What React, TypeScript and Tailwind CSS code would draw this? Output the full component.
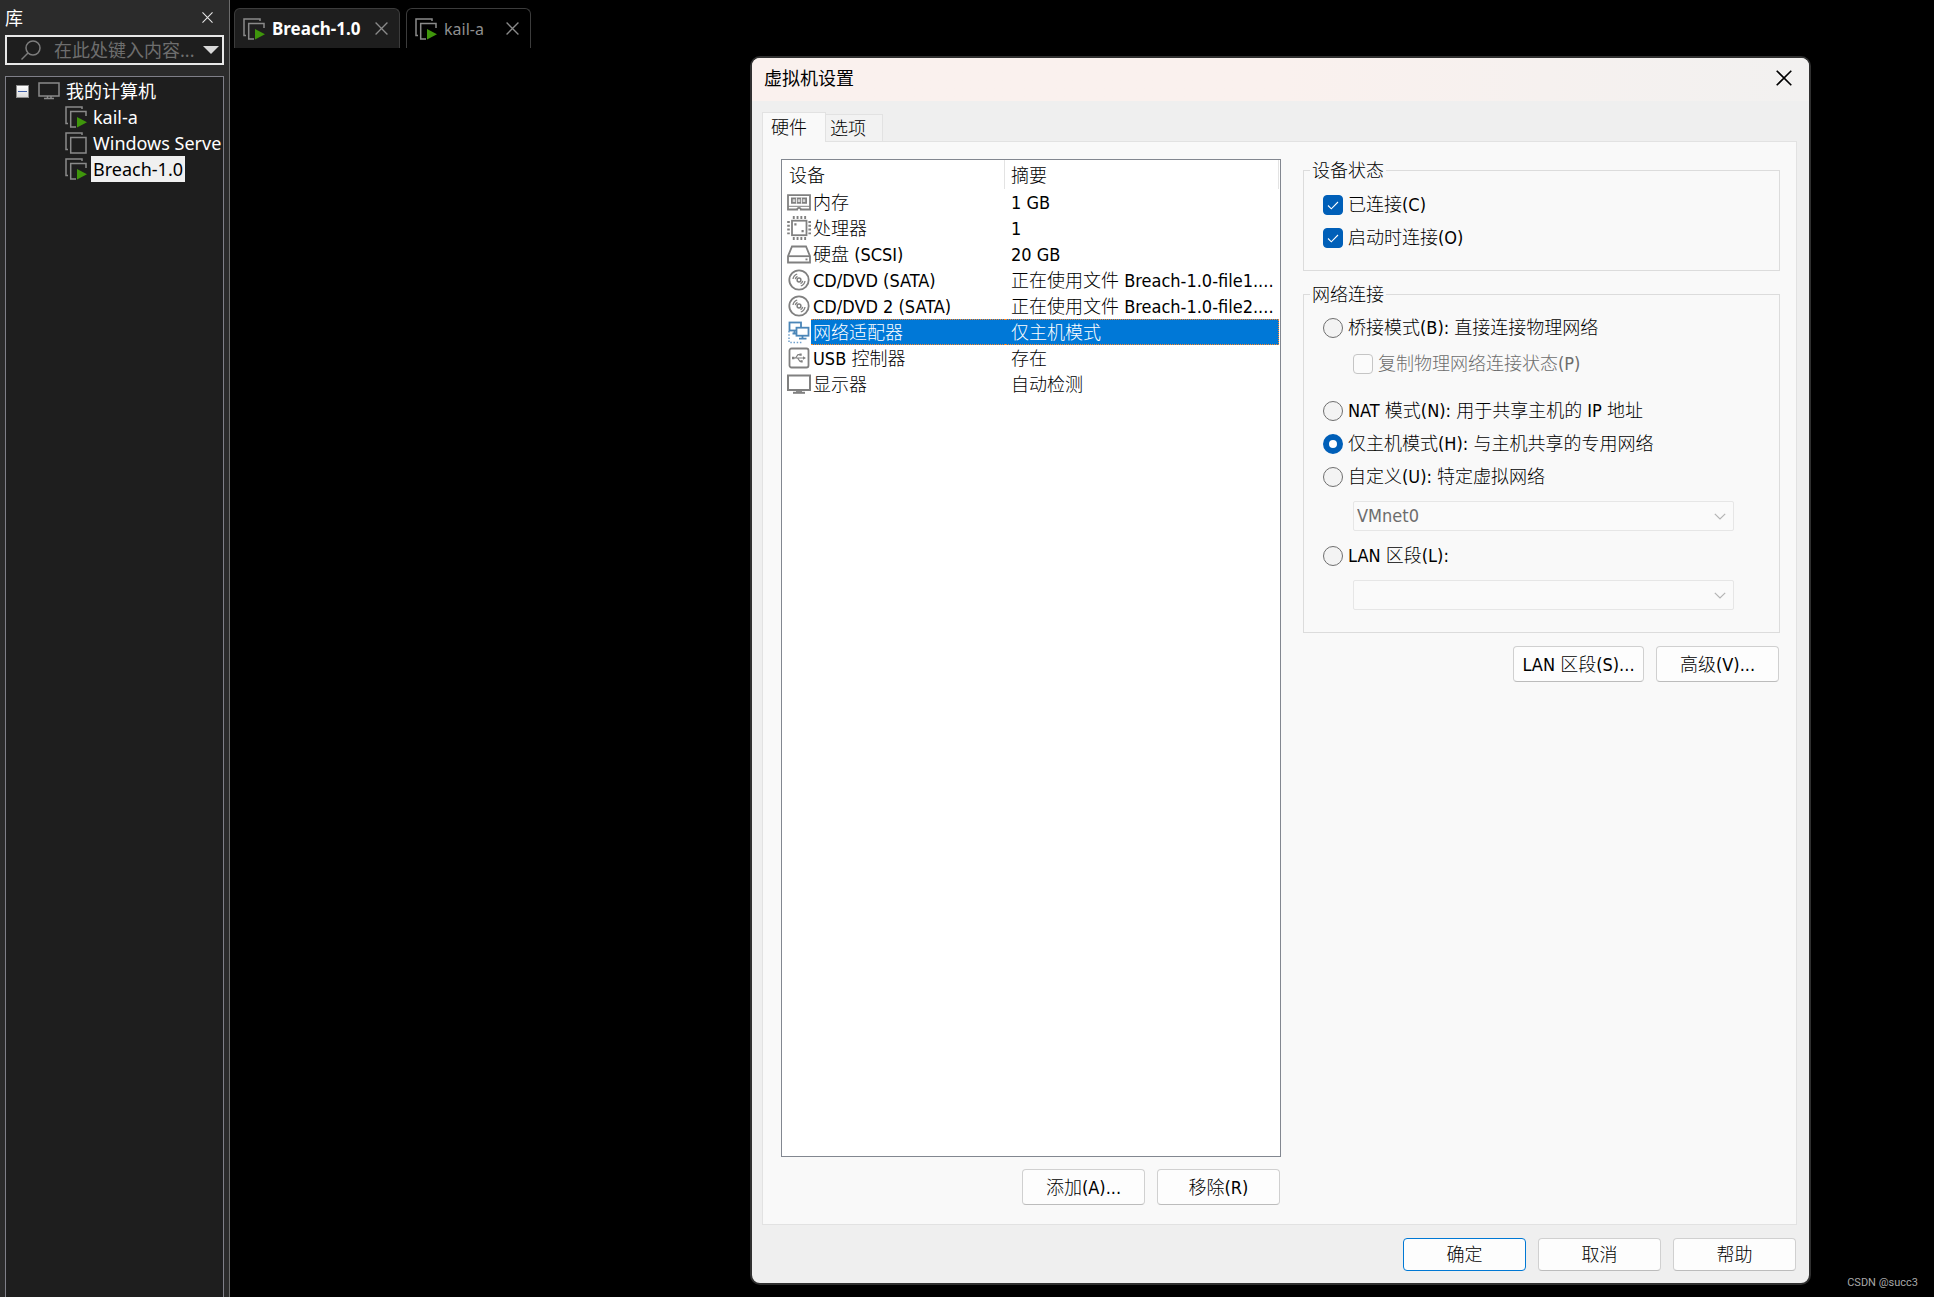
import { useState } from 'react'
import type { ReactNode } from 'react'
import clsx from 'clsx'

interface Device {
  name: string
  summary: string
  icon: ReactNode
}

const devices: Device[] = [
  { name: '内存', summary: '1 GB', icon: <MemoryIcon /> },
  { name: '处理器', summary: '1', icon: <CpuIcon /> },
  { name: '硬盘 (SCSI)', summary: '20 GB', icon: <DiskIcon /> },
  { name: 'CD/DVD (SATA)', summary: '正在使用文件 Breach-1.0-file1....', icon: <DiscIcon /> },
  { name: 'CD/DVD 2 (SATA)', summary: '正在使用文件 Breach-1.0-file2....', icon: <DiscIcon /> },
  { name: '网络适配器', summary: '仅主机模式', icon: <NetworkIcon /> },
  { name: 'USB 控制器', summary: '存在', icon: <UsbIcon /> },
  { name: '显示器', summary: '自动检测', icon: <DisplayIcon /> },
]

export default function App() {
  return (
    <div className="flex h-screen overflow-hidden bg-black font-['Noto_Sans','Noto_Sans_CJK_SC',sans-serif] text-lg leading-[26px]">
      <Library />
      <main className="flex min-w-0 flex-1 flex-col">
        <div className="flex gap-[6px] pt-2 pl-1">
          <VmTab name="Breach-1.0" active />
          <VmTab name="kail-a" />
        </div>
        <div className="mt-2 mr-[123px] mb-3 flex min-h-0 flex-1 justify-end">
          <SettingsDialog />
        </div>
      </main>
      <footer className="absolute right-4 bottom-[7px] font-[Roboto,sans-serif] text-[11px] leading-[14px] text-[#a8a8a8]">
        CSDN @succ3
      </footer>
    </div>
  )
}

/* ---------- 左侧库 ---------- */

function Library() {
  return (
    <aside className="flex w-[230px] shrink-0 flex-col border-r border-[#6b6b6b] bg-[#2b2b2b] pr-[5px] pl-[5px] text-white">
      <div className="flex h-[35px] items-center justify-between pr-[11px]">
        <h2>库</h2>
        <button type="button" aria-label="关闭" className="p-0">
          <CrossIcon className="size-[11px] text-[#e6e6e6]" />
        </button>
      </div>
      <div className="flex h-[30px] items-center border-2 border-[#e8e8e8] bg-[#1e1e1e] pr-[3px] pl-[13px]">
        <svg viewBox="0 0 22 22" className="size-[22px] shrink-0 text-[#7d7d7d]" fill="none" stroke="currentColor" strokeWidth="1.5">
          <circle cx="13" cy="9" r="7" />
          <path d="M8 14 1.500 20.500" />
        </svg>
        <input
          type="text"
          aria-label="搜索"
          placeholder="在此处键入内容..."
          className="ml-[12px] w-0 min-w-0 flex-1 bg-transparent outline-none placeholder:text-[#6e6e6e]"
        />
        <svg viewBox="0 0 16 8" className="h-2 w-4 shrink-0" fill="#d8d8d8">
          <path d="M0 0h16L8 8z" />
        </svg>
      </div>
      <div className="mt-[11px] flex-1 overflow-hidden border border-b-0 border-[#7f7f88] bg-[#1e1e1e] pt-px">
        <div className="flex h-[26px] items-center pl-[10px]">
          <button type="button" aria-label="收起" className="flex size-[13px] items-center justify-center border border-[#8c8c8c] bg-linear-to-b from-white to-[#dcdcdc]">
            <span className="h-px w-[9px] bg-[#3f5fa8]" />
          </button>
          <svg viewBox="0 0 22 18" className="ml-[9px] h-[18px] w-[22px]" fill="none" stroke="#8a8a8a" strokeWidth="1.500">
            <rect x="1" y="1" width="20" height="13" />
            <path d="M9.500 14v3M13 14v3M6 16.500h10" />
          </svg>
          <span className="ml-[6px]">我的计算机</span>
        </div>
        <TreeItem name="kail-a" running />
        <TreeItem name="Windows Serve" />
        <TreeItem name="Breach-1.0" running selected />
      </div>
    </aside>
  )
}

function TreeItem({ name, running, selected }: { name: string; running?: boolean; selected?: boolean }) {
  return (
    <div className="flex h-[26px] items-center pl-[59px]">
      <VmIcon running={running} />
      <span className={clsx('ml-[4px] px-[2px] whitespace-nowrap', selected && 'bg-[#f0f0f0] text-black')}>{name}</span>
    </div>
  )
}

function VmTab({ name, active }: { name: string; active?: boolean }) {
  return (
    <div
      className={clsx(
        'flex h-10 items-center rounded-t-md border border-b-0 border-[#3c3c3c] pr-[11px] pl-2',
        active ? 'w-[166px] bg-[#1e1e1e]' : 'w-[125px]'
      )}
    >
      <VmIcon running />
      <span className={clsx('ml-[7px]', active ? 'text-[17px] font-bold text-white' : 'text-base text-[#8f8f8f]')}>{name}</span>
      <button type="button" aria-label={`关闭 ${name}`} className="ml-auto">
        <CrossIcon className="size-[13px] text-[#8a8a8a]" />
      </button>
    </div>
  )
}

/* ---------- 虚拟机设置 ---------- */

function SettingsDialog() {
  return (
    <section
      role="dialog"
      aria-labelledby="dialog-title"
      className="flex w-[1061px] max-w-full flex-col overflow-hidden rounded-[10px] border-2 border-[#303030] bg-[#efefef] text-black"
    >
      <header className="flex h-[43px] shrink-0 items-center justify-between bg-linear-to-r from-[#faf1ee] from-50% to-[#f2f1f0] pr-[17px] pb-[3px] pl-3">
        <h1 id="dialog-title">虚拟机设置</h1>
        <button type="button" aria-label="关闭">
          <CrossIcon className="size-4 text-black" />
        </button>
      </header>
      <div className="flex min-h-0 flex-1 flex-col pt-[11px] pr-3 pl-[10px] font-['DejaVu_Sans_Condensed','Noto_Sans_CJK_SC',sans-serif] font-light">
        <div role="tablist" className="flex items-end">
          <button type="button" role="tab" aria-selected="true" className="z-10 -mb-px h-[30px] w-[64px] border border-b-0 border-[#e2e2e2] bg-[#f9f9f9] pr-3 pl-2 text-left">
            硬件
          </button>
          <button type="button" role="tab" aria-selected="false" className="-ml-px h-[27px] w-[58px] border border-b-0 border-[#e2e2e2] bg-[#f2f2f2] pt-px pl-1 text-left">
            选项
          </button>
        </div>
        <div className="flex min-h-0 flex-1 gap-[22px] border border-[#e2e2e2] bg-[#f9f9f9] pt-[17px] pr-4 pb-[19px] pl-[18px]">
          <div className="flex min-w-0 flex-1 flex-col">
            <DeviceTable />
            <div className="mt-3 flex justify-end gap-3 pr-px">
              <Button className="h-9 w-[123px] pt-[2px]">添加(A)...</Button>
              <Button className="h-9 w-[123px] pt-[2px]">移除(R)</Button>
            </div>
          </div>
          <NetworkSettings />
        </div>
        <div className="flex shrink-0 justify-end gap-3 pt-[13px] pr-px pb-3">
          <Button className="h-[33px] w-[123px]" primary>
            确定
          </Button>
          <Button className="h-[33px] w-[123px]">取消</Button>
          <Button className="h-[33px] w-[123px]">帮助</Button>
        </div>
      </div>
    </section>
  )
}

function DeviceTable() {
  const [selected, setSelected] = useState(5)
  return (
    <div className="min-h-0 flex-1 overflow-hidden border border-[#828790] bg-white pr-px">
      <table className="w-full table-fixed border-separate border-spacing-0 text-left">
        <colgroup>
          <col className="w-[29px]" />
          <col className="w-[194px]" />
          <col />
        </colgroup>
        <thead>
          <tr className="h-[29px]">
            <th colSpan={2} className="border-r border-[#e3e3e3] p-0 pt-[3px] pl-[7px] font-light">设备</th>
            <th className="border-r border-[#e3e3e3] p-0 pt-[3px] pl-[6px] font-light">摘要</th>
          </tr>
        </thead>
        <tbody>
          {devices.map((d, i) => {
            const on = i === selected
            return (
              <tr key={d.name} onClick={() => setSelected(i)} className="h-[26px]">
                <td className="p-0 pl-[5px]">{d.icon}</td>
                <td
                  className={clsx(
                    'border-y p-0 pt-[2px] pl-[2px] leading-[22px] whitespace-nowrap',
                    on ? 'border-dotted border-[#ff8728] bg-[#0078d7] text-white' : 'border-transparent'
                  )}
                >
                  {d.name}
                </td>
                <td
                  className={clsx(
                    'border-y border-r p-0 pt-[2px] pl-[6px] leading-[22px] whitespace-nowrap',
                    on ? 'border-dotted border-[#ff8728] bg-[#0078d7] text-white' : 'border-transparent'
                  )}
                >
                  {d.summary}
                </td>
              </tr>
            )
          })}
        </tbody>
      </table>
    </div>
  )
}

function NetworkSettings() {
  const [mode, setMode] = useState('host')
  return (
    <div className="w-[477px] shrink-0">
      <Group title="设备状态" className="pt-[7px] pb-4">
        <Check label="已连接(C)" defaultChecked />
        <Check label="启动时连接(O)" defaultChecked />
      </Group>
      <Group title="网络连接" className="mt-3 pt-[6px] pb-[22px]">
        <Radio label="桥接模式(B): 直接连接物理网络" checked={mode === 'bridge'} onSelect={() => setMode('bridge')} />
        <div className="mt-[3px] mb-[14px] pl-[30px]">
          <Check label="复制物理网络连接状态(P)" disabled />
        </div>
        <Radio label="NAT 模式(N): 用于共享主机的 IP 地址" checked={mode === 'nat'} onSelect={() => setMode('nat')} />
        <Radio label="仅主机模式(H): 与主机共享的专用网络" checked={mode === 'host'} onSelect={() => setMode('host')} />
        <Radio label="自定义(U): 特定虚拟网络" checked={mode === 'custom'} onSelect={() => setMode('custom')} />
        <Select label="虚拟网络" value="VMnet0" />
        <Radio label="LAN 区段(L):" checked={mode === 'lan'} onSelect={() => setMode('lan')} />
        <Select label="LAN 区段" value="" />
      </Group>
      <div className="mt-[13px] flex justify-end gap-3 pr-px">
        <Button className="h-9 w-[131px] pt-[2px]">LAN 区段(S)...</Button>
        <Button className="h-9 w-[123px] pt-[2px]">高级(V)...</Button>
      </div>
    </div>
  )
}

function Group({ title, className, children }: { title: string; className?: string; children: ReactNode }) {
  return (
    <fieldset className={clsx('border border-[#dcdcdc] pr-[45px] pl-[19px]', className)}>
      <legend className="-ml-[13px] px-[2px] pt-[2px] leading-5">{title}</legend>
      {children}
    </fieldset>
  )
}

function Check({ label, disabled, defaultChecked }: { label: string; disabled?: boolean; defaultChecked?: boolean }) {
  return (
    <label className={clsx('flex h-[33px] items-center gap-[5px]', disabled && 'text-[#6d6d6d]')}>
      <span className="grid size-5 shrink-0">
        <input
          type="checkbox"
          disabled={disabled}
          defaultChecked={defaultChecked}
          className="peer col-start-1 row-start-1 size-5 appearance-none rounded-[4px] border border-[#757575] bg-[#f3f3f3] checked:border-[#005fb8] checked:bg-[#005fb8] disabled:border-[#c5c5c5] disabled:bg-[#fbfbfb]"
        />
        <svg viewBox="0 0 20 20" className="pointer-events-none invisible col-start-1 row-start-1 size-5 peer-checked:visible" fill="none" stroke="white" strokeWidth="1.1">
          <path d="m5 10.500 3.300 3.300L15 7" />
        </svg>
      </span>
      {label}
    </label>
  )
}

function Radio({ label, checked, onSelect }: { label: string; checked: boolean; onSelect: () => void }) {
  return (
    <label className="flex h-[33px] items-center gap-[5px]">
      <input
        type="radio"
        name="network-mode"
        checked={checked}
        onChange={onSelect}
        className="size-5 shrink-0 appearance-none rounded-full border border-[#6f6f6f] bg-[#f3f3f3] checked:border-6 checked:border-[#005fb8] checked:bg-white"
      />
      <span className="pt-px">{label}</span>
    </label>
  )
}

function Select({ label, value }: { label: string; value: string }) {
  return (
    <div className="my-2 ml-[30px] grid last:mb-0">
      <select
        aria-label={label}
        disabled
        className="col-start-1 row-start-1 h-[30px] w-full appearance-none rounded-[2px] border border-[#e6e6e6] bg-[#fafafa] pl-[3px] text-[#6d6d6d] opacity-100"
      >
        <option>{value}</option>
      </select>
      <svg viewBox="0 0 12 7" className="pointer-events-none col-start-1 row-start-1 mr-2 h-[7px] w-3 self-center justify-self-end" fill="none" stroke="#b4b4b4" strokeWidth="1.2">
        <path d="m.8.8 5.200 5.200L11.200.8" />
      </svg>
    </div>
  )
}

function Button({ className, primary, children }: { className?: string; primary?: boolean; children: ReactNode }) {
  return (
    <button
      type="button"
      className={clsx(
        'rounded-[4px] border bg-[#fdfdfd] text-center whitespace-nowrap',
        primary ? 'border-[#0078d4]' : 'border-[#d0d0d0] border-b-[#bcbcbc]',
        className
      )}
    >
      {children}
    </button>
  )
}

/* ---------- 图标 ---------- */

function CrossIcon({ className }: { className?: string }) {
  return (
    <svg viewBox="0 0 16 16" className={clsx('block', className)} fill="none" stroke="currentColor" strokeWidth="1.6">
      <path d="m.7.7 14.600 14.600M15.300.7.7 15.300" />
    </svg>
  )
}

function VmIcon({ running }: { running?: boolean }) {
  return (
    <svg viewBox="0 0 22 22" className="size-[22px] shrink-0" fill="none" stroke="#8a8a8a" strokeWidth="1.500">
      <path d="M3 17.500H1V1h16v2" />
      {running ? (
        <>
          <path d="M21 10V5.500H5.700V21H11" />
          <path d="M12 11v10.500l10-5.200z" fill="#3f960c" stroke="none" />
        </>
      ) : (
        <path d="M5.700 5.500H21V21H5.700z" />
      )}
    </svg>
  )
}

function DeviceSvg({ children, color = '#808080' }: { children: ReactNode; color?: string }) {
  return (
    <svg viewBox="0 0 24 26" className="block h-[26px] w-6" fill="none" stroke={color} strokeWidth="1.800">
      {children}
    </svg>
  )
}

function MemoryIcon() {
  return (
    <DeviceSvg>
      <path d="M1 6.200h22v14.300h-9.200c0-1-.8-1.700-1.800-1.700s-1.800.7-1.800 1.700H1z" />
      <path d="M1 17.300h22" strokeWidth="1" />
      <path d="M4 8.500h16v6.300H4z" fill="#808080" stroke="none" />
      <path d="M5.700 10.300h2.600v2.600H5.700zM10.700 10.300h2.600v2.600h-2.600zM15.700 10.300h2.600v2.600h-2.600z" fill="#d4d4d4" stroke="none" />
      <path d="M9.500 8.500v6.300M14.500 8.500v6.300" stroke="white" strokeWidth=".8" />
    </DeviceSvg>
  )
}

function CpuIcon() {
  return (
    <DeviceSvg>
      <rect x="5" y="5.700" width="14.500" height="14.500" />
      <path d="M5.800 2.500h13.500M5.800 23.500h13.500" strokeWidth="2.800" strokeDasharray="1.900 1.900" />
      <path d="M1.500 6v14M22.700 6v14" strokeWidth="2.600" strokeDasharray="1.900 1.900" />
      <path d="M7.300 8.300h2.200v2.200H7.300zM14.500 15h2.200v2.200h-2.200z" fill="#808080" stroke="none" />
    </DeviceSvg>
  )
}

function DiskIcon() {
  return (
    <DeviceSvg>
      <path d="M5 5.500h14l4 9.700v6.300H1v-6.300z" />
      <path d="M1 15.200h22" />
      <path d="M18.500 17.500h2v1.800h-2z" fill="#808080" stroke="none" />
    </DeviceSvg>
  )
}

function DiscIcon() {
  return (
    <DeviceSvg>
      <circle cx="12" cy="13" r="9.700" />
      <circle cx="12" cy="13" r="1.900" strokeWidth="1.500" />
      <path d="M6 12c.4-2.400 2-4.300 4.200-5M8.300 12.200c.2-1.300 1-2.300 2.200-2.800M18 14c-.4 2.400-2 4.300-4.200 5M15.700 13.800c-.2 1.300-1 2.300-2.200 2.800" strokeWidth="1.300" />
    </DeviceSvg>
  )
}

function NetworkIcon() {
  return (
    <DeviceSvg color="#4b86b8">
      <path d="M2 12v11.500h14" stroke="#6fa0cc" strokeWidth="1.500" strokeDasharray="1.500 1.700" />
      <rect x="2.500" y="3.500" width="11.500" height="8" />
      <path d="M5.500 14.500h4M7.500 11.500v3" />
      <rect x="9.500" y="8.700" width="12" height="8" fill="white" />
      <path d="M15.500 16.700v3M12 19.700h7.500" />
    </DeviceSvg>
  )
}

function UsbIcon() {
  return (
    <DeviceSvg>
      <rect x="2.500" y="3.500" width="19" height="19" rx="2" />
      <path d="M6.500 13H17M8.500 13l2.500-3.300h2M10.500 13l2.500 3.300h1.500" strokeWidth="1.200" />
      <path d="m19 13-3-1.800v3.600zM5 11.800h2.400v2.400H5zM12.500 8.600h2.200v2.200h-2.200zM13.500 15.200h2.200v2.200h-2.200z" fill="#808080" stroke="none" />
    </DeviceSvg>
  )
}

function DisplayIcon() {
  return (
    <DeviceSvg>
      <rect x="1" y="4.500" width="22" height="14.500" strokeWidth="2" />
      <path d="M6 21.800h12" strokeWidth="2" />
      <path d="M9 20h6" />
    </DeviceSvg>
  )
}
